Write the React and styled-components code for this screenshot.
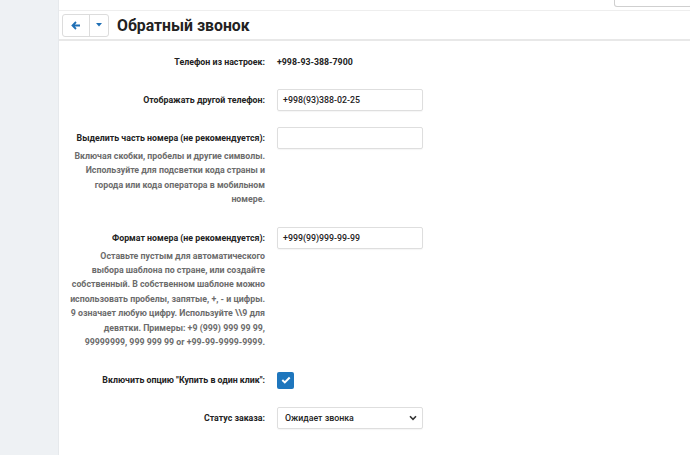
import React from "react";
import styled, { createGlobalStyle } from "styled-components";

const GlobalStyle = createGlobalStyle`
  html, body {
    margin: 0;
    padding: 0;
    background: #ffffff;
  }
  body {
    font-family: Roboto, "Noto Sans", "DejaVu Sans", sans-serif;
    color: #222;
  }
`;

const Page = styled.div`
  display: flex;
  width: 690px;
  height: 455px;
  overflow: hidden;
`;

const Sidebar = styled.div`
  width: 58px;
  flex: none;
  background: #eef1f4;
  border-right: 1px solid #e6e9ec;
`;

const Main = styled.div`
  flex: 1;
  display: flex;
  flex-direction: column;
  background: #fff;
`;

const TopStrip = styled.div`
  flex: none;
  height: 10px;
  border-bottom: 1px solid #eeeeee;
  display: flex;
  justify-content: flex-end;
`;

const TopButton = styled.div`
  width: 76px;
  height: 6px;
  border: 1px solid #cfcfcf;
  border-top: none;
  border-radius: 0 0 3px 3px;
  margin-right: -2px;
`;

const Header = styled.div`
  flex: none;
  height: 28px;
  display: flex;
  align-items: center;
  gap: 8px;
  padding: 0 3px;
  border-bottom: 2px solid #e8e8e8;
`;

const BtnGroup = styled.div`
  display: flex;
  height: 21px;
  border: 1px solid #dcdcdc;
  border-radius: 3px;
  background: #fff;
`;

const GroupBtn = styled.div`
  width: ${p => p.w}px;
  display: flex;
  align-items: center;
  justify-content: center;
  color: #1f6fb5;
  & + & {
    border-left: 1px solid #dcdcdc;
  }
`;

const Title = styled.h1`
  margin: 0;
  font-size: 15.8px;
  font-weight: 700;
  color: #222;
`;

const Form = styled.div`
  padding: 10px 0 0 2px;
  display: flex;
  flex-direction: column;
  gap: 16px;
`;

const Row = styled.div`
  display: grid;
  grid-template-columns: 204px 146px;
  column-gap: 12px;
  align-items: start;
`;

const LabelCell = styled.div`
  display: flex;
  flex-direction: column;
  align-items: flex-end;
  text-align: right;
`;

const Label = styled.div`
  height: 22px;
  display: flex;
  align-items: center;
  font-size: 8.8px;
  font-weight: 700;
  color: #222;
  white-space: nowrap;
`;

const Help = styled.div`
  font-size: 8.8px;
  font-weight: 700;
  line-height: 14.4px;
  color: #6c6c6c;
  padding-bottom: 4px;
  white-space: nowrap;
`;

const Value = styled.div`
  height: 22px;
  display: flex;
  align-items: center;
  font-size: 8.8px;
  font-weight: 700;
  color: #222;
`;

const Input = styled.div`
  height: 20px;
  border: 1px solid #dedede;
  border-radius: 2px;
  box-shadow: 0 1px 1px rgba(0, 0, 0, 0.04);
  display: flex;
  align-items: center;
  padding: 0 5px;
  font-size: 8.8px;
  font-weight: 500;
  color: #222;
`;

const Select = styled(Input)`
  justify-content: space-between;
  padding: 0 5px 0 7px;
`;

const CheckWrap = styled.div`
  height: 22px;
  display: flex;
  align-items: center;
`;

const Checkbox = styled.div`
  width: 17px;
  height: 17px;
  border-radius: 2px;
  background: #1e76bd;
  display: flex;
  align-items: center;
  justify-content: center;
`;

const ArrowLeft = () => (
  <svg width="10" height="9" viewBox="0 0 10 9">
    <path d="M5 1 L1.5 4.5 L5 8 M1.8 4.5 H9" fill="none" stroke="currentColor" strokeWidth="1.8" />
  </svg>
);

const Caret = () => (
  <svg width="6" height="4" viewBox="0 0 6 4">
    <path d="M0 0 H6 L3 3.5 Z" fill="currentColor" />
  </svg>
);

const Chevron = () => (
  <svg width="8" height="6" viewBox="0 0 8 6">
    <path d="M1 1.3 L4 4.3 L7 1.3" fill="none" stroke="#333" strokeWidth="1.6" />
  </svg>
);

const Check = () => (
  <svg width="10" height="8" viewBox="0 0 10 8">
    <path d="M1.3 4 L3.8 6.4 L8.7 1.5" fill="none" stroke="#fff" strokeWidth="2" />
  </svg>
);

const helpHighlight = [
  "Включая скобки, пробелы и другие символы.",
  "Используйте для подсветки кода страны и",
  "города или кода оператора в мобильном",
  "номере."
];

const helpFormat = [
  "Оставьте пустым для автоматического",
  "выбора шаблона по стране, или создайте",
  "собственный. В собственном шаблоне можно",
  "использовать пробелы, запятые, +, - и цифры.",
  "9 означает любую цифру. Используйте \\\\9 для",
  "девятки. Примеры: +9 (999) 999 99 99,",
  "99999999, 999 999 99 or +99-99-9999-9999."
];

const HelpText = ({ lines }) => (
  <Help>
    {lines.map(l => (
      <div key={l}>{l}</div>
    ))}
  </Help>
);

export default function App() {
  return (
    <Page>
      <GlobalStyle />
      <Sidebar />
      <Main>
        <TopStrip>
          <TopButton />
        </TopStrip>
        <Header>
          <BtnGroup>
            <GroupBtn w={26}>
              <ArrowLeft />
            </GroupBtn>
            <GroupBtn w={18}>
              <Caret />
            </GroupBtn>
          </BtnGroup>
          <Title>Обратный звонок</Title>
        </Header>
        <Form>
          <Row>
            <LabelCell>
              <Label>Телефон из настроек:</Label>
            </LabelCell>
            <Value>+998-93-388-7900</Value>
          </Row>
          <Row>
            <LabelCell>
              <Label>Отображать другой телефон:</Label>
            </LabelCell>
            <Input>+998(93)388-02-25</Input>
          </Row>
          <Row>
            <LabelCell>
              <Label>Выделить часть номера (не рекомендуется):</Label>
              <HelpText lines={helpHighlight} />
            </LabelCell>
            <Input />
          </Row>
          <Row>
            <LabelCell>
              <Label>Формат номера (не рекомендуется):</Label>
              <HelpText lines={helpFormat} />
            </LabelCell>
            <Input>+999(99)999-99-99</Input>
          </Row>
          <Row>
            <LabelCell>
              <Label>Включить опцию "Купить в один клик":</Label>
            </LabelCell>
            <CheckWrap>
              <Checkbox>
                <Check />
              </Checkbox>
            </CheckWrap>
          </Row>
          <Row>
            <LabelCell>
              <Label>Статус заказа:</Label>
            </LabelCell>
            <Select>
              <span>Ожидает звонка</span>
              <Chevron />
            </Select>
          </Row>
        </Form>
      </Main>
    </Page>
  );
}
